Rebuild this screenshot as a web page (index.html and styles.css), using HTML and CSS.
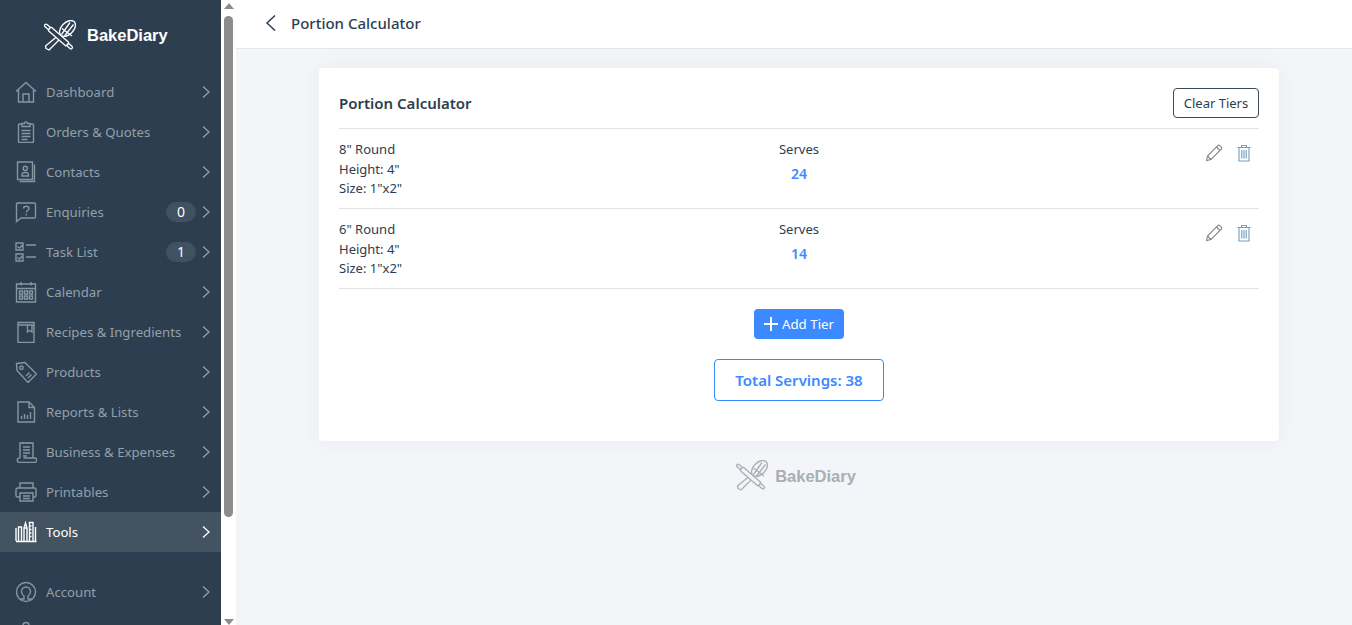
FILE: index.html
```html
<!DOCTYPE html>
<html lang="en">
<head>
    <meta charset="UTF-8" />
    <title>Portion Calculator</title>
    <link rel="stylesheet" href="styles.css">
</head>
<body>
    <svg class="defs" width="0" height="0">
        <symbol id="logo" viewBox="0 0 32 32">
            <g class="logo-art">
                <!-- whisk -->
                <ellipse cx="23.500" cy="8.500" rx="9.500" ry="6" transform="rotate(-45 23.500 8.500)"/>
                <path d="M17.500 14.500l8.500-12M20.500 16l9-11.500M18 8.500l10 7.500"/>
                <path class="logo-fill" d="M15.500 14.500l2.500 2.500L5 30l-3-1.500-.5-2.500z"/>
                <!-- rolling pin -->
                <g transform="rotate(41 14.500 16.500)">
                    <rect class="logo-fill" x="2.500" y="14.200" width="24" height="4.600" rx="1"/>
                    <rect class="logo-fill" x="-3.500" y="15" width="6" height="3" rx="1.500"/>
                    <rect class="logo-fill" x="26.500" y="15" width="6" height="3" rx="1.500"/>
                </g>
            </g>
        </symbol>
        <symbol id="chev" viewBox="0 0 10 14">
            <path d="M2 1.500L8 7l-6 5.500" fill="none" stroke="currentColor" stroke-width="1.300"/>
        </symbol>
    </svg>

    <aside class="sidebar">
        <div class="brand">
            <svg class="brand-logo"><use href="#logo"/></svg>
            <span class="brand-name">BakeDiary</span>
        </div>
        <nav>
            <a class="nav-item">
                <svg class="nav-icon" viewBox="0 0 22 22"><path d="M1 10.500L11 1.500l10 9M3.500 8.500v12.500h15V8.500M8 21v-8h6v8"/></svg>
                <span class="nav-label">Dashboard</span>
                <svg class="nav-chev"><use href="#chev"/></svg>
            </a>
            <a class="nav-item">
                <svg class="nav-icon" viewBox="0 0 22 22"><path d="M7 3H4.500a1 1 0 0 0-1 1v16.500a1 1 0 0 0 1 1h13a1 1 0 0 0 1-1V4a1 1 0 0 0-1-1H15M7 2.500h2.500a1.500 1.500 0 0 1 3 0H15V5.500H7zM6.500 9.500h9M6.500 12.500h9M6.500 15.500h9M6.500 18.500h6"/></svg>
                <span class="nav-label">Orders &amp; Quotes</span>
                <svg class="nav-chev"><use href="#chev"/></svg>
            </a>
            <a class="nav-item">
                <svg class="nav-icon" viewBox="0 0 22 22"><path d="M2.500 1h15v17.500h-15zM19.500 3.500v17h-15M7 15h6.500v-1.500c0-1.500-1.500-2-3.200-2s-3.300.5-3.300 2zM10.300 9.500a2 2 0 1 0 0-4.200 2 2 0 0 0 0 4.200z"/></svg>
                <span class="nav-label">Contacts</span>
                <svg class="nav-chev"><use href="#chev"/></svg>
            </a>
            <a class="nav-item">
                <svg class="nav-icon" viewBox="0 0 22 22"><path d="M2.500 2h17a1 1 0 0 1 1 1v13a1 1 0 0 1-1 1H6l-4.500 3.500V3a1 1 0 0 1 1-1zM8.500 7.500c0-3 5.500-3 5.500 0 0 2-2.700 2-2.700 4M11.300 13v1.500"/></svg>
                <span class="nav-label">Enquiries</span>
                <span class="nav-badge">0</span>
                <svg class="nav-chev"><use href="#chev"/></svg>
            </a>
            <a class="nav-item">
                <svg class="nav-icon" viewBox="0 0 22 22"><path d="M1 2h7v7H1zM1 13h7v7H1zM2.500 5.500l2 1.500 3-3M2.500 16.500l2 1.500 3-3M11 4h10M11 16h10"/></svg>
                <span class="nav-label">Task List</span>
                <span class="nav-badge">1</span>
                <svg class="nav-chev"><use href="#chev"/></svg>
            </a>
            <a class="nav-item">
                <svg class="nav-icon" viewBox="0 0 22 22"><path d="M1.500 3h19v18h-19zM1.500 7.500h19M6 1v3.500M16 1v3.500M4.500 10h3v3h-3zM9.500 10h3v3h-3zM14.500 10h3v3h-3zM4.500 15h3v3h-3zM9.500 15h3v3h-3zM14.500 15h3v3h-3z"/></svg>
                <span class="nav-label">Calendar</span>
                <svg class="nav-chev"><use href="#chev"/></svg>
            </a>
            <a class="nav-item">
                <svg class="nav-icon" viewBox="0 0 22 22"><path d="M3 1.500h16v20H3zM3 4h16M12.500 4v7l2.200-1.500 2.300 1.500V4"/></svg>
                <span class="nav-label">Recipes &amp; Ingredients</span>
                <svg class="nav-chev"><use href="#chev"/></svg>
            </a>
            <a class="nav-item">
                <svg class="nav-icon" viewBox="0 0 22 22"><path d="M1.500 2.500l8.500-1 11.500 11.500-8.500 8.500L2 9.500zM6.500 5a1.700 1.700 0 1 0 0 3.400 1.700 1.700 0 0 0 0-3.400zM11 15l3.500-3.500M13 17l3.500-3.500"/></svg>
                <span class="nav-label">Products</span>
                <svg class="nav-chev"><use href="#chev"/></svg>
            </a>
            <a class="nav-item">
                <svg class="nav-icon" viewBox="0 0 22 22"><path d="M3 1h11l5.500 5.500V21H3zM14 1v5.500h5.500M6.500 18v-3M9.500 18v-5M12.500 18v-4M15.500 18v-7"/></svg>
                <span class="nav-label">Reports &amp; Lists</span>
                <svg class="nav-chev"><use href="#chev"/></svg>
            </a>
            <a class="nav-item">
                <svg class="nav-icon" viewBox="0 0 22 22"><path d="M5 17V2h13v15M5 17H4.500a2.200 2.200 0 0 0 0 4.500h15a2.200 2.200 0 0 0 0-4.500H8.500M8 6h7M8 9h7M8 12h7M8 15h4M8 1v2M12 1v2M15 1v2"/></svg>
                <span class="nav-label">Business &amp; Expenses</span>
                <svg class="nav-chev"><use href="#chev"/></svg>
            </a>
            <a class="nav-item">
                <svg class="nav-icon" viewBox="0 0 22 22"><path d="M5 7V2h13v5M5 16H2.500a1.500 1.500 0 0 1-1.500-1.500V9a2 2 0 0 1 2-2h16.500a1.500 1.500 0 0 1 1.500 1.500v6a1.500 1.500 0 0 1-1.500 1.500H18M5 12h13v8H5zM8 15h7M8 17.500h7"/></svg>
                <span class="nav-label">Printables</span>
                <svg class="nav-chev"><use href="#chev"/></svg>
            </a>
            <a class="nav-item is-active">
                <svg class="nav-icon" viewBox="0 0 22 22"><path d="M1 7v13M1 20.500h20.500M3.500 6h3v14.500h-3zM9 7l1.500-5L12 7v13.500H9zM9 7h3M14.500 1.500H18v19h-3.500zM14.500 5h2M14.500 8.500h2M14.500 12h2M14.500 15.500h2M20.500 6v14.500"/></svg>
                <span class="nav-label">Tools</span>
                <svg class="nav-chev"><use href="#chev"/></svg>
            </a>
            <a class="nav-item nav-gap">
                <svg class="nav-icon" viewBox="0 0 22 22"><path d="M11 1.500a9.500 9.500 0 1 0 0 19 9.500 9.500 0 0 0 0-19zM5.500 18h3.500v-3c-1.500-1-2.500-2.500-2.500-4.500a4.500 4.500 0 0 1 9 0c0 2-1 3.500-2.500 4.500v3h3.500"/></svg>
                <span class="nav-label">Account</span>
                <svg class="nav-chev"><use href="#chev"/></svg>
            </a>
            <a class="nav-item">
                <svg class="nav-icon" viewBox="0 0 22 22"><path d="M11 1.500a3 3 0 1 0 0 6 3 3 0 0 0 0-6zM4 20c0-5 3-8 7-8s7 3 7 8z"/></svg>
            </a>
        </nav>
    </aside>

    <div class="scrollbar">
        <span class="arrow-up"></span>
        <span class="thumb"></span>
        <span class="arrow-down"></span>
    </div>

    <main class="main">
        <header class="topbar">
            <svg class="back" viewBox="0 0 12 18"><path d="M10 1.500L2 9l8 7.500" fill="none" stroke="currentColor" stroke-width="1.500"/></svg>
            <h1 class="topbar-title">Portion Calculator</h1>
        </header>

        <div class="content">
            <section class="card">
                <div class="card-head">
                    <h2 class="card-title">Portion Calculator</h2>
                    <button class="btn-clear">Clear Tiers</button>
                </div>

                <div class="tier">
                    <div class="tier-info">
                        <div>8" Round</div>
                        <div>Height: 4"</div>
                        <div>Size: 1"x2"</div>
                    </div>
                    <div class="tier-serves">
                        <div>Serves</div>
                        <div class="serves-num">24</div>
                    </div>
                    <div class="tier-actions">
                        <svg class="act-edit" viewBox="0 0 18 18"><path d="M1.500 16.500l1-4.500L12.800 1.700a1.500 1.500 0 0 1 2.100 0l1.400 1.400a1.500 1.500 0 0 1 0 2.100L6 15.500zM2.500 12L6 15.500M11.500 3l3.500 3.500"/></svg>
                        <svg class="act-trash" viewBox="0 0 14 18"><path d="M.5 3.500h13M4.500 3.500V1.500h5v2M2 3.500V17h10V3.500M4.800 6v8.500M7 6v8.500M9.200 6v8.500"/></svg>
                    </div>
                </div>

                <div class="tier">
                    <div class="tier-info">
                        <div>6" Round</div>
                        <div>Height: 4"</div>
                        <div>Size: 1"x2"</div>
                    </div>
                    <div class="tier-serves">
                        <div>Serves</div>
                        <div class="serves-num">14</div>
                    </div>
                    <div class="tier-actions">
                        <svg class="act-edit" viewBox="0 0 18 18"><path d="M1.500 16.500l1-4.500L12.800 1.700a1.500 1.500 0 0 1 2.100 0l1.400 1.400a1.500 1.500 0 0 1 0 2.100L6 15.500zM2.500 12L6 15.500M11.500 3l3.500 3.500"/></svg>
                        <svg class="act-trash" viewBox="0 0 14 18"><path d="M.5 3.500h13M4.500 3.500V1.500h5v2M2 3.500V17h10V3.500M4.800 6v8.500M7 6v8.500M9.200 6v8.500"/></svg>
                    </div>
                </div>

                <div class="card-foot">
                    <button class="btn-add"><svg class="plus" viewBox="0 0 14 14"><path d="M7 0v14M0 7h14" stroke="currentColor" stroke-width="2"/></svg>Add Tier</button>
                    <div class="total">Total Servings: 38</div>
                </div>
            </section>

            <div class="foot-brand">
                <svg class="foot-logo"><use href="#logo"/></svg>
                <span class="foot-name">BakeDiary</span>
            </div>
        </div>
    </main>
</body>
</html>
```

FILE: styles.css
```css
*{
    margin: 0;
    padding: 0;
    box-sizing: border-box;
}
html,body{
    width: 100%;
    height: 100%;
    overflow: hidden;
}
body{
    display: flex;
    font-family: "Noto Sans", "Open Sans", sans-serif;
    font-size: 14px;
    color: #2c3e50;
    background: #f4f5f9;
}
.defs{
    display: none;
}

/* logo, used by the sidebar and the footer */
.logo-art{
    fill: none;
    stroke: currentColor;
    stroke-width: 1.300;
    stroke-linejoin: round;
}
.logo-fill{
    fill: var(--logo-bg);
}

/* sidebar */
.sidebar{
    width: 221px;
    height: 625px;
    flex: none;
    overflow: hidden;
    background: #2d3e50;
}
.brand{
    --logo-bg: #2d3e50;
    height: 72px;
    display: flex;
    align-items: center;
    padding: 0 0 1px 44px;
    color: #fff;
}
.brand-logo{
    width: 32px;
    height: 32px;
}
.brand-name{
    margin-left: 11px;
    font-family: "Liberation Sans", Arial, sans-serif;
    font-size: 16.500px;
    font-weight: bold;
}
.nav-item{
    height: 40px;
    display: flex;
    align-items: center;
    padding: 0 10px 0 15px;
    color: #92a0ab;
}
.nav-gap{
    margin-top: 20px;
}
.nav-icon{
    width: 22px;
    height: 22px;
    flex: none;
    fill: none;
    stroke: #8596a3;
    stroke-width: 1.400;
}
.nav-label{
    margin-left: 9px;
    flex: 1;
    font-size: 13.200px;
    white-space: nowrap;
}
.nav-badge{
    width: 30px;
    height: 20px;
    margin-right: 5px;
    border-radius: 10px;
    background: #405162;
    color: #fff;
    text-align: center;
    line-height: 20px;
}
.nav-chev{
    width: 10px;
    height: 14px;
    flex: none;
    color: #92a0ab;
}
.is-active{
    background: #435362;
    color: #fff;
}
.is-active .nav-chev{
    color: #fff;
}
.is-active .nav-icon{
    stroke: #fff;
}

/* scrollbar */
.scrollbar{
    width: 15px;
    height: 625px;
    flex: none;
    display: flex;
    flex-direction: column;
    align-items: center;
    background: #fff;
}
.arrow-up,.arrow-down{
    width: 0;
    height: 0;
    border-left: 5px solid transparent;
    border-right: 5px solid transparent;
}
.arrow-up{
    margin-top: 3px;
    border-bottom: 6px solid #8c8c8c;
}
.arrow-down{
    margin-top: auto;
    border-top: 6px solid #8c8c8c;
}
.thumb{
    width: 9px;
    height: 501px;
    margin-top: 7px;
    border-radius: 5px;
    background: #8c8c8c;
}

/* main */
.main{
    flex: 1;
    min-width: 0;
}
.topbar{
    height: 49px;
    display: flex;
    align-items: center;
    padding: 0 0 2px 29px;
    background: #fff;
    border-bottom: 1px solid #e4e5e9;
}
.back{
    width: 12px;
    height: 18px;
    color: #2c3e50;
}
.topbar-title{
    margin-left: 14px;
    font-size: 15px;
    font-weight: 500;
}
.content{
    padding-top: 19px;
}
.card{
    width: 960px;
    height: 373px;
    margin-left: 83px;
    padding: 20px;
    border-radius: 4px;
    background: #fff;
    box-shadow: 0 0 20px rgba(40,50,70,.05);
}
.card-head{
    height: 41px;
    display: flex;
    align-items: center;
    justify-content: space-between;
    padding-bottom: 10px;
    border-bottom: 1px solid #e2e3e5;
}
.card-title{
    font-size: 15px;
    font-weight: 600;
}
.btn-clear{
    width: 86px;
    height: 30px;
    border: 1px solid #3d4a57;
    border-radius: 4px;
    background: #fff;
    color: #2c3e50;
    font: inherit;
    font-size: 13px;
}
.tier{
    height: 80px;
    display: flex;
    padding-top: 11px;
    border-bottom: 1px solid #e2e3e5;
    font-size: 13px;
    line-height: 19.500px;
}
.tier-info{
    width: 420px;
}
.tier-serves{
    width: 80px;
    text-align: center;
}
.serves-num{
    margin-top: 4px;
    color: #3b8aff;
    font-size: 14px;
    font-weight: 600;
}
.tier-actions{
    flex: 1;
    display: flex;
    justify-content: flex-end;
    align-items: flex-start;
    gap: 14px;
    padding: 4px 8px 0 0;
}
.act-edit{
    width: 18px;
    height: 18px;
    fill: none;
    stroke: #7f868d;
    stroke-width: 1.100;
}
.act-trash{
    width: 14px;
    height: 18px;
    fill: none;
    stroke: #6f9dbf;
    stroke-width: 1.100;
}
.card-foot{
    display: flex;
    flex-direction: column;
    align-items: center;
    padding-top: 20px;
}
.btn-add{
    width: 90px;
    height: 30px;
    display: flex;
    align-items: center;
    justify-content: center;
    gap: 4px;
    border: none;
    border-radius: 4px;
    background: #3b8aff;
    color: #fff;
    font: inherit;
    font-size: 13.300px;
}
.plus{
    width: 14px;
    height: 14px;
}
.total{
    width: 170px;
    height: 42px;
    margin-top: 20px;
    border: 1px solid #3b8aff;
    border-radius: 4px;
    color: #3b8aff;
    font-size: 15px;
    font-weight: 600;
    line-height: 40px;
    text-align: center;
}
.foot-brand{
    --logo-bg: #f4f5f9;
    width: 960px;
    display: flex;
    align-items: center;
    justify-content: center;
    margin: 19px 0 0 83px;
    padding-right: 6px;
    color: #a9aeb5;
}
.foot-logo{
    width: 32px;
    height: 32px;
}
.foot-name{
    margin-left: 7px;
    font-family: "Liberation Sans", Arial, sans-serif;
    font-size: 16.500px;
    font-weight: bold;
}
```
